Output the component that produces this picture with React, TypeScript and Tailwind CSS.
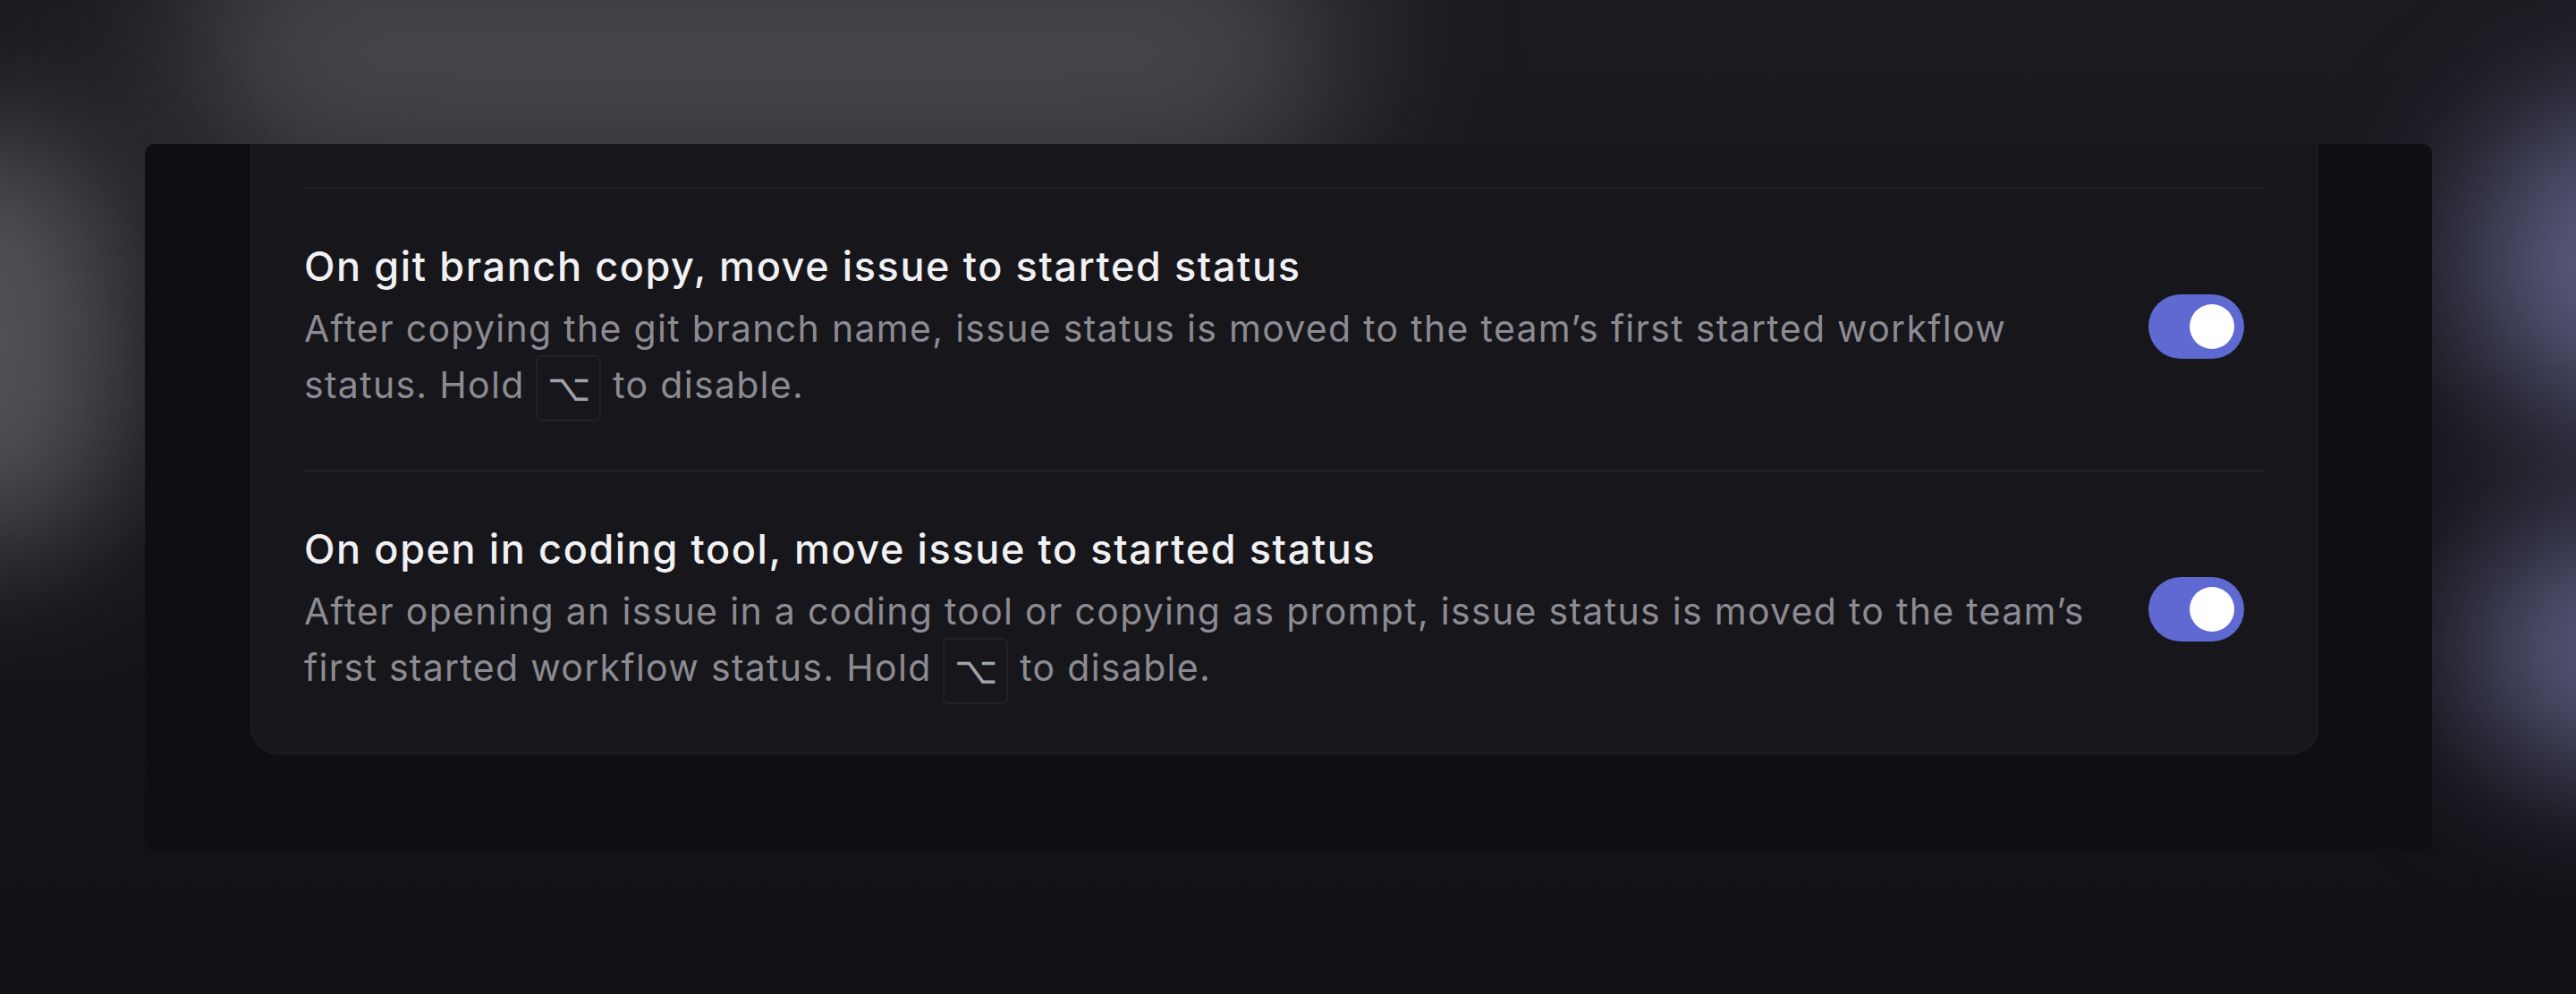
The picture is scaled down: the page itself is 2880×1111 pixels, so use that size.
import { ReactNode } from "react";

type Setting = {
  title: string;
  description: ReactNode;
  enabled: boolean;
};

const OptionKey = () => (
  <kbd className="-my-[8px] inline-flex h-[74px] w-[73px] items-center justify-center rounded-[6px] border-2 border-[#222127] align-middle font-['DejaVu_Sans',sans-serif] text-[42px] font-light tracking-normal text-[#a3a2a8]">
    ⌥
  </kbd>
);

const settings: Setting[] = [
  {
    title: "On git branch copy, move issue to started status",
    description: (
      <>
        After copying the git branch name, issue status is moved to the team’s first started workflow status. Hold{" "}
        <OptionKey /> to disable.
      </>
    ),
    enabled: true,
  },
  {
    title: "On open in coding tool, move issue to started status",
    description: (
      <>
        After opening an issue in a coding tool or copying as prompt, issue status is moved to the team’s first
        started workflow status. Hold <OptionKey /> to disable.
      </>
    ),
    enabled: true,
  },
];

const Toggle = ({ on }: { on: boolean }) => (
  <div
    className={`flex h-[72px] w-[107px] shrink-0 items-center rounded-full p-[11px] ${
      on ? "justify-end bg-[#5e6ad2]" : "justify-start bg-[#2a2930]"
    }`}
  >
    <div className="h-[50px] w-[50px] rounded-full bg-white" />
  </div>
);

const SettingRow = ({ setting }: { setting: Setting }) => (
  <div className="flex items-center border-t-2 border-[#201f25] pt-[57px] pb-[62px]">
    <div className="w-[2005px]">
      <h3 className="text-[45px] leading-[60px] font-medium tracking-[1.6px] text-[#f1f1f3]">{setting.title}</h3>
      <p className="mt-[8px] text-[41px] leading-[63px] tracking-[1.3px] text-[#8c8b92]">{setting.description}</p>
    </div>
    <div className="ml-auto mr-[23px]">
      <Toggle on={setting.enabled} />
    </div>
  </div>
);

export default function App() {
  return (
    <div className="relative h-[1111px] w-[2880px] overflow-hidden bg-gradient-to-b from-[#1c1b21] to-[#111015] pl-[162px] pt-[161px] font-['Inter',sans-serif]">
      {/* soft backdrop glows */}
      <div className="absolute left-[200px] -top-[90px] h-[300px] w-[1300px] rounded-full bg-[#48474c] blur-[90px]" />
      <div className="absolute -left-[180px] top-[140px] h-[480px] w-[320px] rounded-full bg-[#535258] blur-[80px]" />
      <div className="absolute left-[2760px] top-[120px] h-[350px] w-[420px] rounded-full bg-[#5b5c80] blur-[80px]" />
      <div className="absolute left-[2760px] top-[590px] h-[270px] w-[420px] rounded-full bg-[#5b5c80] blur-[80px]" />

      <div className="relative h-[789px] w-[2557px] overflow-hidden rounded-[10px] bg-[#0f0e12] pl-[118px]">
        <div className="w-[2312px] rounded-b-[30px] border-x-2 border-b-2 border-[#1d1c21] bg-[#17161b] px-[58px]">
          <div className="h-[48px]" />
          {settings.map((s) => (
            <SettingRow key={s.title} setting={s} />
          ))}
        </div>
      </div>
    </div>
  );
}
